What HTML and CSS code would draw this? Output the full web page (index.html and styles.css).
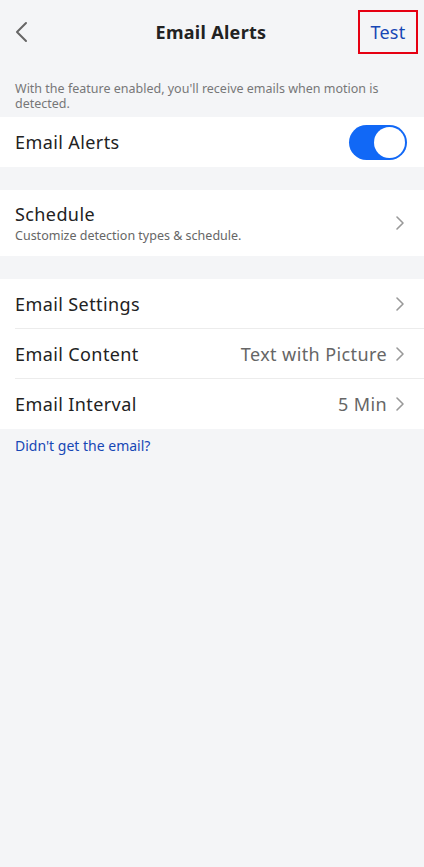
FILE: index.html
```html
<!DOCTYPE html>
<html lang="en">
<head>
  <meta charset="utf-8">
  <meta name="viewport" content="width=device-width">
  <title>Email Alerts</title>
  <link rel="stylesheet" href="styles.css">
</head>
<body>
  <nav class="topbar">
    <span class="back">
      <svg width="14" height="22" viewBox="0 0 14 22"><path d="M12 2 L3 11 L12 20" fill="none" stroke="#666" stroke-width="2" stroke-linecap="round" stroke-linejoin="round"/></svg>
    </span>
    <span class="title">Email Alerts</span>
    <span class="test">Test</span>
  </nav>

  <p class="hint">With the feature enabled, you'll receive emails when motion is detected.</p>

  <div class="group">
    <div class="row">
      <span class="label">Email Alerts</span>
      <span class="toggle"><span class="knob"></span></span>
    </div>
  </div>

  <div class="group">
    <div class="row tall">
      <div class="stack">
        <span class="label">Schedule</span>
        <span class="sub">Customize detection types &amp; schedule.</span>
      </div>
      <span class="chev"><svg width="10" height="16" viewBox="0 0 10 16"><path d="M2 2 L8 8 L2 14" fill="none" stroke="#999" stroke-width="1.6" stroke-linecap="round" stroke-linejoin="round"/></svg></span>
    </div>
  </div>

  <div class="group">
    <div class="row">
      <span class="label">Email Settings</span>
      <span class="chev"><svg width="10" height="16" viewBox="0 0 10 16"><path d="M2 2 L8 8 L2 14" fill="none" stroke="#999" stroke-width="1.6" stroke-linecap="round" stroke-linejoin="round"/></svg></span>
    </div>
    <div class="row">
      <span class="label">Email Content</span>
      <span class="value">Text with Picture</span>
      <span class="chev"><svg width="10" height="16" viewBox="0 0 10 16"><path d="M2 2 L8 8 L2 14" fill="none" stroke="#999" stroke-width="1.6" stroke-linecap="round" stroke-linejoin="round"/></svg></span>
    </div>
    <div class="row">
      <span class="label">Email Interval</span>
      <span class="value">5 Min</span>
      <span class="chev"><svg width="10" height="16" viewBox="0 0 10 16"><path d="M2 2 L8 8 L2 14" fill="none" stroke="#999" stroke-width="1.6" stroke-linecap="round" stroke-linejoin="round"/></svg></span>
    </div>
  </div>

  <a class="help">Didn't get the email?</a>
</body>
</html>
```

FILE: styles.css
```css
* {
  box-sizing: border-box;
}
body {
  margin: 0;
  padding: 0;
  background-color: #f4f5f7;
  font-family: "Noto Sans", Roboto, sans-serif;
  color: #222;
}

.topbar {
  height: 64px;
  display: flex;
  align-items: center;
  justify-content: space-between;
  padding: 0 6px 0 14px;
}
.back {
  display: flex;
  width: 60px;
}
.title {
  font-size: 18px;
  font-weight: bold;
  letter-spacing: 0.3px;
  color: #222;
  margin-left: -10px;
}
.test {
  width: 60px;
  height: 44px;
  border: 2px solid #e60012;
  color: #1747b5;
  font-size: 18px;
  letter-spacing: 0.3px;
  display: flex;
  align-items: center;
  justify-content: center;
}

.hint {
  margin: 0;
  padding: 17px 15px 6px;
  font-size: 12.5px;
  line-height: 15px;
  color: #777;
}

.group {
  background: #fff;
  margin-bottom: 23px;
}
.row {
  height: 50px;
  display: flex;
  align-items: center;
  margin-left: 15px;
  padding-right: 19px;
  border-bottom: 1px solid #ececec;
}
.row:last-child {
  border-bottom: none;
}
.row.tall {
  height: 66px;
}
.stack {
  display: flex;
  flex-direction: column;
  flex: 1;
}
.label {
  font-size: 18px;
  letter-spacing: 0.4px;
  flex: 1;
  color: #222;
}
.sub {
  font-size: 12.5px;
  color: #666;
  margin-top: 1px;
}
.value {
  font-size: 18px;
  letter-spacing: 0.4px;
  color: #666;
  margin-right: 8px;
}
.chev {
  display: flex;
}

.toggle {
  width: 58px;
  height: 35px;
  border-radius: 18px;
  background: #1168f6;
  display: flex;
  align-items: center;
  justify-content: flex-end;
  padding-right: 2px;
  margin-right: -2px;
}
.knob {
  width: 31px;
  height: 31px;
  border-radius: 50%;
  background: #fff;
}

.help {
  display: block;
  margin-top: -16px;
  padding: 0 15px;
  font-size: 14px;
  color: #1747b5;
}
```
